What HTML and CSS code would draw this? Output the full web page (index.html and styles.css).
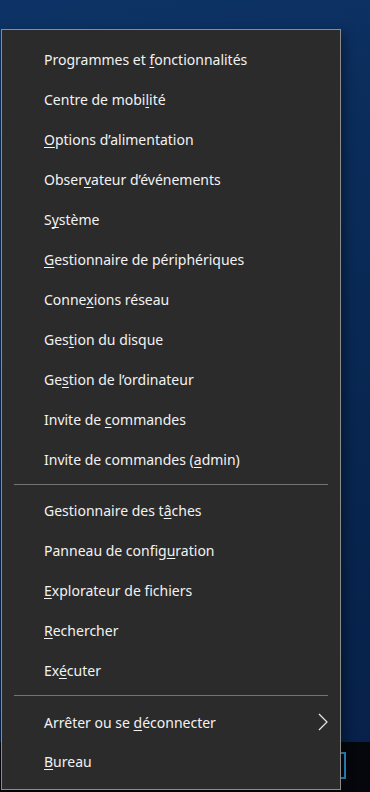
FILE: index.html
```html
<!DOCTYPE html>
<html lang="fr">
<head>
    <meta charset="UTF-8">
    <meta name="viewport" content="width=device-width, initial-scale=1.0">
    <title>Menu Windows + X</title>
    <link rel="stylesheet" href="styles.css">
</head>
<body>
    <div class="desktop">
        <div class="wallpaper"></div>
        <div class="taskbar">
            <div class="task-icon"></div>
        </div>
    </div>

    <div class="menu">
        <div class="item">Programmes et <u>f</u>onctionnalités</div>
        <div class="item">Centre de mobi<u>l</u>ité</div>
        <div class="item"><u>O</u>ptions d’alimentation</div>
        <div class="item">Obser<u>v</u>ateur d’événements</div>
        <div class="item">S<u>y</u>stème</div>
        <div class="item"><u>G</u>estionnaire de périphériques</div>
        <div class="item">Conne<u>x</u>ions réseau</div>
        <div class="item">Ges<u>t</u>ion du disque</div>
        <div class="item">Ge<u>s</u>tion de l’ordinateur</div>
        <div class="item">Invite de <u>c</u>ommandes</div>
        <div class="item">Invite de commandes (<u>a</u>dmin)</div>

        <div class="separator"></div>

        <div class="item">Gestionnaire des t<u>â</u>ches</div>
        <div class="item">Panneau de config<u>u</u>ration</div>
        <div class="item"><u>E</u>xplorateur de fichiers</div>
        <div class="item"><u>R</u>echercher</div>
        <div class="item">Ex<u>é</u>cuter</div>

        <div class="separator"></div>

        <div class="item has-sub">
            <span>Arrêter ou se <u>d</u>éconnecter</span>
            <svg class="chevron" width="10" height="18" viewBox="0 0 10 18">
                <path d="M1 1 L9 9 L1 17" fill="none" stroke="#e8e8e8" stroke-width="1.2"/>
            </svg>
        </div>
        <div class="item"><u>B</u>ureau</div>
    </div>
</body>
</html>
```

FILE: styles.css
```css
* {
    margin: 0;
    padding: 0;
    box-sizing: border-box;
}

body {
    width: 370px;
    height: 792px;
    overflow: hidden;
    font-family: "Noto Sans", "Open Sans", Arial, sans-serif;
    background-color: #0a2a58;
}

.desktop {
    display: flex;
    flex-direction: column;
    height: 792px;
}

.wallpaper {
    flex: 1;
    background: linear-gradient(170deg, #0d3366 0%, #0b2d5c 20%, #082650 60%, #07214a 100%);
}

.taskbar {
    height: 50px;
    background-color: #05070c;
    display: flex;
    justify-content: flex-end;
    padding-top: 10px;
}

.task-icon {
    width: 32px;
    height: 27px;
    margin-right: 24px;
    border: 2px solid #2b8fd6;
}

.menu {
    position: absolute;
    top: 29px;
    left: 1px;
    width: 340px;
    height: 761px;
    background-color: #2b2b2b;
    border: 1px solid #8c8c8c;
    padding: 10px 0 8px 0;
    color: #f2f2f2;
    font-size: 14px;
    box-shadow: 4px 4px 10px rgba(0, 0, 0, 0.35);
}

.item {
    height: 40px;
    line-height: 39px;
    padding-left: 42px;
    padding-right: 12px;
    white-space: nowrap;
}

.item u {
    text-decoration-thickness: 1px;
    text-underline-offset: 2px;
    text-decoration-skip-ink: none;
}

.has-sub {
    display: flex;
    align-items: center;
    justify-content: space-between;
}

.chevron {
    display: block;
}

.separator {
    height: 1px;
    margin: 4px 12px 6px 12px;
    background-color: #737373;
}
```
